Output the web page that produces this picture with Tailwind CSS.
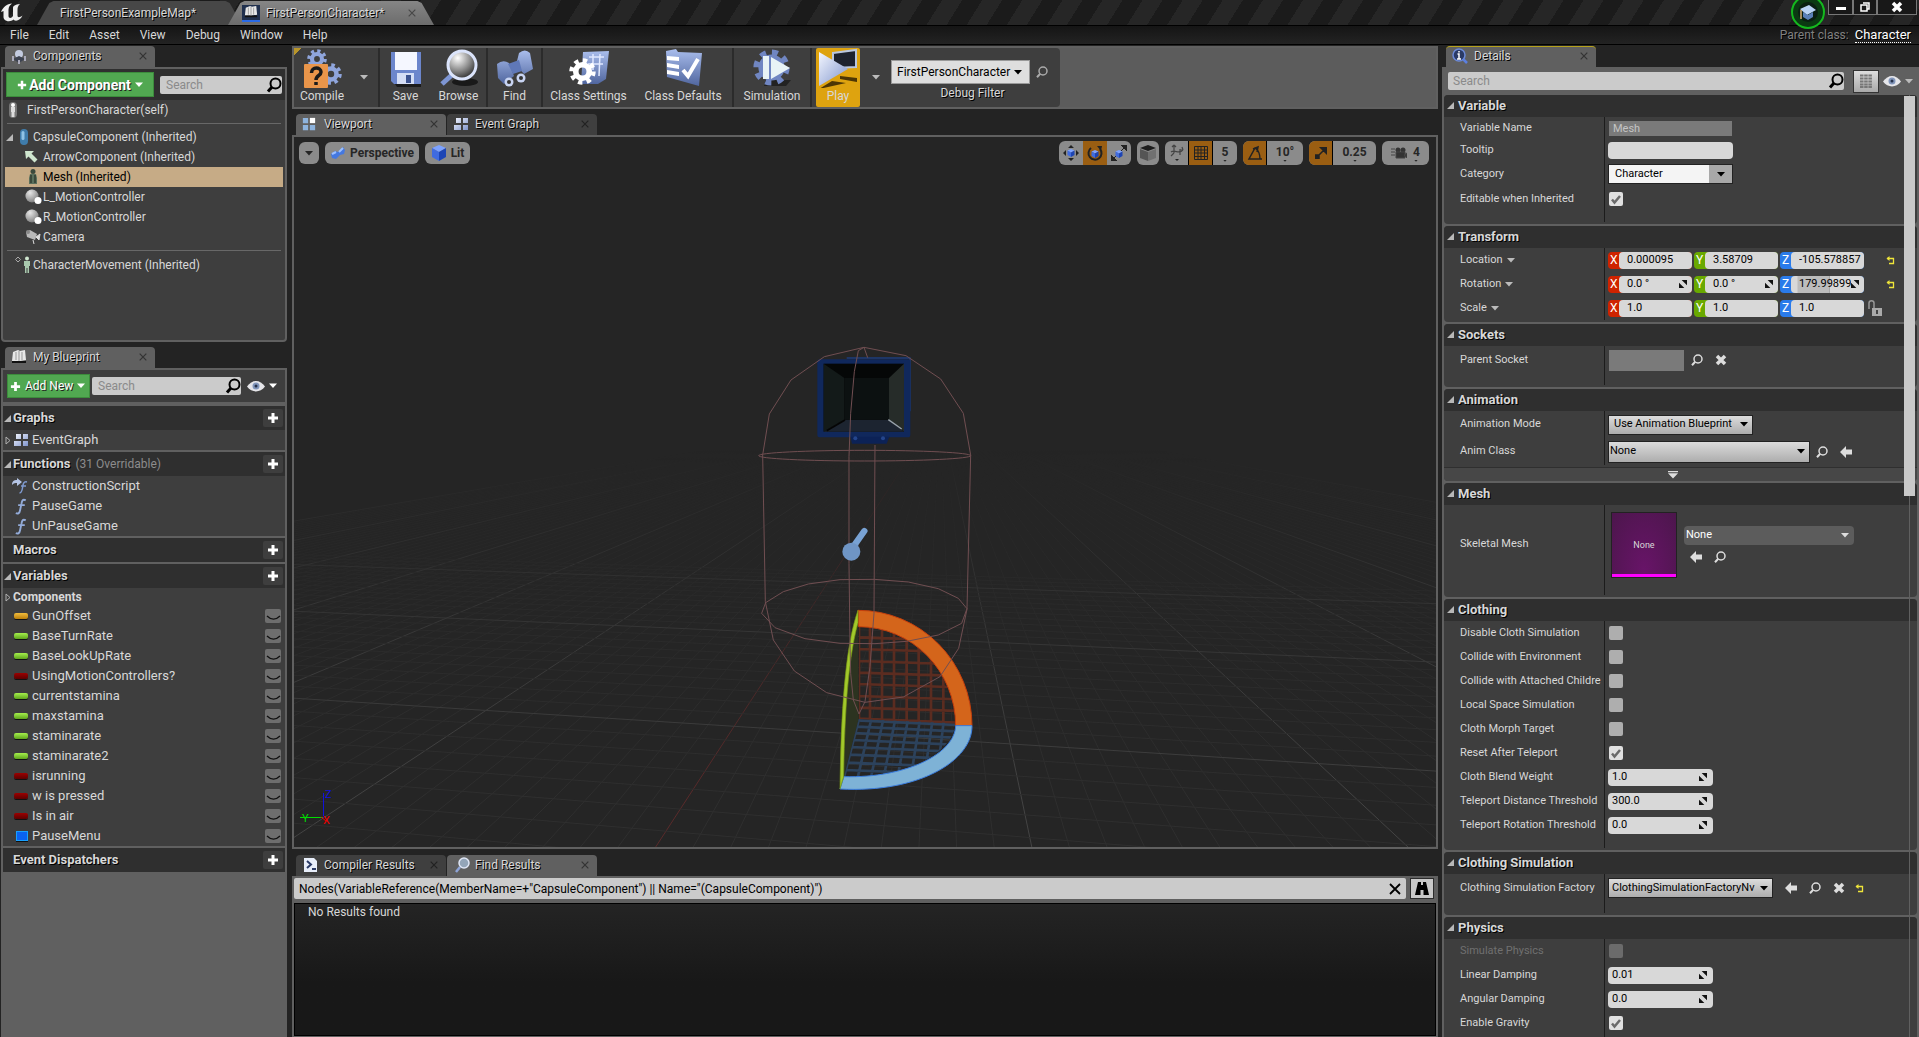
<!DOCTYPE html>
<html lang="en">
<head>
    <meta charset="UTF-8">
    <meta name="viewport" content="width=device-width, initial-scale=1.0">
    <title>FirstPersonCharacter</title>
    <script src="https://cdn.jsdelivr.net/npm/@tailwindcss/browser@4"></script>
</head>
<body class="flex h-screen flex-col overflow-hidden bg-[#232323] font-[Roboto,'Liberation_Sans',sans-serif] text-xs text-[#d8d8d8]">

    <!-- Shared icons -->
    <svg class="absolute size-0">
        <defs>
            <linearGradient id="steel" x1="0" y1="0" x2="1" y2="1"><stop offset="0" stop-color="#f4f7ff"/><stop offset="1" stop-color="#7f94cc"/></linearGradient>
            <linearGradient id="blue" x1="0" y1="0" x2="0" y2="1"><stop offset="0" stop-color="#a9bdec"/><stop offset="1" stop-color="#50669f"/></linearGradient>
            <radialGradient id="lens" cx=".35" cy=".25" r=".9"><stop offset="0" stop-color="#fff"/><stop offset=".5" stop-color="#8b8b8b"/><stop offset="1" stop-color="#0c0c0c"/></radialGradient>
        </defs>
        <symbol id="mag" viewBox="0 0 16 16"><circle cx="9.5" cy="6.5" r="5" fill="none" stroke="currentColor" stroke-width="2"/><path d="M6 10 2 14.5" stroke="currentColor" stroke-width="3"/></symbol>
        <symbol id="mag-sm" viewBox="0 0 12 12"><circle cx="7" cy="5" r="4" fill="none" stroke="currentColor" stroke-width="1.5"/><path d="M4.2 7.8 1 11.2" stroke="currentColor" stroke-width="2"/></symbol>
        <symbol id="back" viewBox="0 0 12 12"><path d="M0 6 6 0v3.5h6v5H6V12z" fill="currentColor"/></symbol>
        <symbol id="cross" viewBox="0 0 12 12"><path d="m2 2 8 8m0-8-8 8" stroke="currentColor" stroke-width="3.5"/></symbol>
        <symbol id="cross-thin" viewBox="0 0 12 12"><path d="m1 1 10 10m0-10-10 10" stroke="currentColor" stroke-width="1.8"/></symbol>
        <symbol id="plus" viewBox="0 0 12 12"><path d="M6 1v10M1 6h10" stroke="currentColor" stroke-width="3"/></symbol>
        <symbol id="down" viewBox="0 0 8 5"><path d="M0 0h8L4 4.5z" fill="currentColor"/></symbol>
        <symbol id="down-line" viewBox="0 0 10 8"><path d="M0 0h10v1.2H0zM0 2.2h10L5 7.5z" fill="currentColor"/></symbol>
        <symbol id="open" viewBox="0 0 7 7"><path d="M7 0v7H0z" fill="#b8b8b8"/></symbol>
        <symbol id="closed" viewBox="0 0 6 9"><path d="M1 1v7l4-3.5z" fill="none" stroke="#b0b0b0"/></symbol>
        <symbol id="reset" viewBox="0 0 9 9"><path d="M1 2.5h6.500v5H3" fill="none" stroke="#efe53a" stroke-width="1.300"/><path d="M3.500 0v5L.5 2.500z" fill="#efe53a"/></symbol>
        <symbol id="spin" viewBox="0 0 9 9"><path d="M3 0h6v6zM0 3v6h6z" fill="#111"/></symbol>
        <symbol id="eye" viewBox="0 0 18 12"><path d="M0 6.5C5-1 13-1 18 6.5 13 13 5 13 0 6.5z" fill="#e6e6ea"/><circle cx="9" cy="6" r="3.500" fill="#8296bb"/><circle cx="9" cy="6" r="1.500" fill="#26324c"/></symbol>
        <symbol id="gear" viewBox="0 0 24 24"><circle cx="12" cy="12" r="9.5" fill="none" stroke="currentColor" stroke-width="4.500" stroke-dasharray="3.73 3.73"/><circle cx="12" cy="12" r="6" fill="none" stroke="currentColor" stroke-width="5"/></symbol>
        <symbol id="graph" viewBox="0 0 16 14"><path d="M3 1h5v5H3zM10 1h5v5h-5zM1 8h7v5H1zM10 8h5v5h-5z" fill="url(#steel)"/></symbol>
        <symbol id="grid4" viewBox="0 0 16 16"><path d="M1 1h6v6H1zM1 9h6v6H1zM9 9h6v6H9z" fill="#8eb4de"/><path d="M9 1h6v6H9z" fill="#fff"/></symbol>
        <symbol id="book" viewBox="0 0 16 16"><path d="M2 3 7 1l2 1 5-1 1 10-6 1-8 0z" fill="#e8e8e8"/><path d="M1 12h14v2H1z" fill="#111"/><path d="M5 3v8M8 2v10M11 3v8" stroke="#999"/></symbol>
        <symbol id="fn" viewBox="0 0 14 18"><path d="M12 2.500C9 .5 8 3 7.500 6L6 13c-.5 3-2 4-4.500 3M4 7.500h7" fill="none" stroke="#93abd8" stroke-width="2"/></symbol>
        <symbol id="sphere" viewBox="0 0 18 16"><circle cx="7" cy="7" r="6.500" fill="url(#lens)"/><circle cx="7" cy="7" r="6.500" fill="#ccc" opacity=".5"/><circle cx="13" cy="11.500" r="3.500" fill="#fff"/></symbol>
        <symbol id="cube" viewBox="0 0 16 16"><path d="m8 0 7 3-7 4-7-4z" fill="#7da2ff"/><path d="m1 3 7 4v9l-7-4z" fill="#3f6be0"/><path d="m15 3-7 4v9l7-4z" fill="#1d45b5"/></symbol>
        <symbol id="check" viewBox="0 0 14 14"><path d="m3 7.500 2.500 3L11 4" fill="none" stroke="#6a6a6a" stroke-width="2.500"/></symbol>
    </svg>

    <!-- Title bar -->
    <header class="flex h-[25px] shrink-0 items-end bg-[repeating-linear-gradient(122deg,#1b1b1b_0_17px,#262626_17px_34px)]">
        <svg class="h-6 w-[37px] self-start" viewBox="0 0 37 24"><path d="M1 12C3 7 7 4 12 3.500c-3 2.500-3.500 4-3.500 8V16c0 2.500 3 2.500 4.500 0V8c0-2 2-3.500 7-4-2 2-2.500 3-2.500 6v5.500c0 2.500 2.500 2 5 0-2 5-7 6.500-9 4-3 3-10 2-10-2.500V11z" fill="#eee"/></svg>
        <button class="h-6 w-[205px] bg-[#474747] pl-[23px] text-left [clip-path:polygon(0_100%,6%_8%,8%_0,92%_0,94%_8%,100%_100%)] [text-shadow:1px_1px_0_#000]">FirstPersonExampleMap*</button>
        <div class="-ml-[14px] flex h-6 w-[206px] items-center bg-linear-to-b from-[#868686] to-[#6c6c6c] pl-[14px] [clip-path:polygon(0_100%,6%_8%,8%_0,92%_0,94%_8%,100%_100%)]">
            <span class="grid h-[17px] w-[18px] place-items-center border-b-2 border-[#2a6be8] bg-[#20304e]"><svg class="size-3.5"><use href="#book"/></svg></span>
            <button class="ml-1.5 w-[142px] text-left [text-shadow:1px_1px_0_#000]">FirstPersonCharacter*</button>
            <svg class="size-2 text-[#484848]"><use href="#cross-thin"/></svg>
        </div>
        <div class="ml-auto flex self-start pr-0.5">
            <svg class="relative z-10 -mb-5 mr-0.5 h-[30px] w-9" viewBox="0 0 36 30"><circle cx="18" cy="12" r="16" fill="#0b3a12" stroke="#14b81e" stroke-width="2"/><circle cx="18" cy="12" r="10" fill="#0a1f12"/><path d="m10 9 9-4 7 5-9 5z" fill="#b9d3f5"/><path d="m13 12 5 3 5-3v5l-5 3-5-3z" fill="#5a80b8"/><path d="M11 10v9" stroke="#d9b27a" stroke-width="1.5"/></svg>
            <button aria-label="Minimize" class="grid h-[15px] w-[25px] place-items-end justify-center border border-t-0 border-[#777] bg-[#181818] pb-1"><span class="h-[3px] w-2.5 bg-white"></span></button>
            <button aria-label="Restore" class="grid h-[15px] w-6 place-items-center border border-t-0 border-[#777] bg-[#181818]"><svg class="size-2.5" viewBox="0 0 10 10"><path d="M3 1h6v6H7M1 3h6v6H1z" fill="none" stroke="#fff" stroke-width="1.5"/></svg></button>
            <button aria-label="Close" class="grid h-[15px] w-10 place-items-center border border-t-0 border-[#777] bg-[#181818] text-white"><svg class="size-3"><use href="#cross"/></svg></button>
        </div>
    </header>

    <!-- Menu bar -->
    <nav class="flex h-5 shrink-0 items-center border-y border-black bg-linear-to-b from-[#151515] to-[#232323] px-2.5 [text-shadow:1px_1px_0_#000]">
        <div class="flex gap-5">
            <button>File</button><button>Edit</button><button>Asset</button><button>View</button><button>Debug</button><button>Window</button><button>Help</button>
        </div>
        <span class="ml-auto text-[#808080]">Parent class:</span>
        <a href="#" class="ml-1.5 -mr-0.5 border-b border-dotted border-white text-[13px] leading-[14px] text-white">Character</a>
    </nav>

    <main class="flex min-h-0 flex-1 gap-1 pt-px">

        <!-- Left column -->
        <aside class="flex w-[287px] shrink-0 flex-col pl-px">
            <div class="ml-1 flex h-[21px] w-[150px] shrink-0 items-center rounded-t bg-[#606060] px-1.5 pb-0.5 [text-shadow:1px_1px_0_#000]">
                <svg class="size-4" viewBox="0 0 16 16"><circle cx="8" cy="6" r="4" fill="#c3cbe0"/><path d="m8 8 6 3-6 4-6-4z" fill="#3c4250"/><path d="M2 8v5m12-5v5M8 12v4" stroke="#aab" stroke-width="2"/></svg>
                <span class="ml-1.5">Components</span><svg class="ml-auto mr-0.5 size-2 text-[#333]"><use href="#cross-thin"/></svg>
            </div>
            <section class="flex h-[275px] shrink-0 flex-col rounded-b border-2 border-[#606060] bg-[#3e3e3e]">
                <div class="flex h-[31px] shrink-0 items-center gap-1.5 bg-[#2f2f2f] px-[3px]">
                    <button class="flex h-[25px] w-[148px] items-center justify-center gap-0.5 border border-[#3c8c3c] bg-[#51a851] text-sm font-bold text-white [text-shadow:1px_1px_0_#222]"><svg class="size-2.5"><use href="#plus"/></svg>Add Component<svg class="ml-0.5 h-1.5 w-2"><use href="#down"/></svg></button>
                    <label class="flex h-[18px] flex-1 items-center rounded-xs bg-[#cbcbcb] pl-1.5 text-black"><input aria-label="Search components" placeholder="Search" class="w-full min-w-0 outline-none placeholder:text-[#8a8a8a]"><svg class="size-4 shrink-0"><use href="#mag"/></svg></label>
                </div>
                <ul class="leading-5">
                    <li class="flex h-5 items-center pl-1"><svg class="mr-2 h-4 w-3" viewBox="0 0 12 16"><rect x="2" width="8" height="16" rx="4" fill="#777"/><circle cx="6" cy="3" r="2" fill="#fff"/><path d="M4 5h4v5H4zM4.500 10h3v5h-3z" fill="#ddd"/></svg>FirstPersonCharacter(self)</li>
                    <li class="mx-1 mb-0.5 mt-[3px] h-0.5 border-t border-[#686868]"></li>
                    <li class="flex h-5 items-center pl-[3px]"><svg class="size-[7px]"><use href="#open"/></svg><svg class="ml-1.5 mr-1 h-4 w-2.5" viewBox="0 0 10 16"><rect x="1" width="8" height="16" rx="4" fill="#3f7cab"/><rect x="2.500" y="2" width="3" height="9" rx="1.500" fill="#8fc3e6"/></svg>CapsuleComponent (Inherited)</li>
                    <li class="flex h-5 items-center pl-5"><svg class="mr-1 size-4" viewBox="0 0 16 16"><path d="M2 2h9L8.500 4.500l6 6-3 3-6-6L3 10z" fill="#cfe6cf"/></svg>ArrowComponent (Inherited)</li>
                    <li class="mx-0.5 flex h-5 items-center bg-[#c6ab86] pl-5 text-black"><svg class="mr-0.5 h-4 w-4" viewBox="0 0 16 16"><circle cx="8" cy="2.500" r="2.500" fill="#3c4a3c"/><path d="M5 5h6l1 4v6H4V9z" fill="#5b6f5b"/><path d="M6 6v8m4-8v8" stroke="#1c241c"/></svg>Mesh (Inherited)</li>
                    <li class="flex h-5 items-center pl-[22px]"><svg class="h-4 w-[18px]"><use href="#sphere"/></svg>L_MotionController</li>
                    <li class="flex h-5 items-center pl-[22px]"><svg class="h-4 w-[18px]"><use href="#sphere"/></svg>R_MotionController</li>
                    <li class="flex h-5 items-center pl-[22px]"><svg class="mr-0.5 size-4" viewBox="0 0 16 16"><path d="m1 3 4-2 7 4-2 6-8-3z" fill="#b9b9b9"/><circle cx="3" cy="3" r="2" fill="#888"/><path d="m11 8 4-3-1 6zM8 11l1 4" fill="#ddd" stroke="#ddd"/></svg>Camera</li>
                    <li class="mx-1 my-[3px] h-0.5 border-t border-[#686868]"></li>
                    <li class="flex h-5 items-center pl-3"><svg class="mr-0.5 h-[18px] w-4" viewBox="0 0 16 18"><path d="m3 1 2.500 2.500L3 6 .5 3.500z" fill="none" stroke="#aaa"/><circle cx="12" cy="2.500" r="2" fill="#cfe6cf"/><path d="M9 5h6v5h-1v7h-1.500v-5h-1v5H10v-7H9z" fill="#a9c9ae"/></svg>CharacterMovement (Inherited)</li>
                </ul>
            </section>

            <div class="ml-1 mt-[5px] flex h-[21px] w-[150px] shrink-0 items-center rounded-t bg-[#606060] px-1.5 pb-0.5 [text-shadow:1px_1px_0_#000]">
                <svg class="size-4"><use href="#book"/></svg><span class="ml-1.5">My Blueprint</span><svg class="ml-auto mr-0.5 size-2 text-[#333]"><use href="#cross-thin"/></svg>
            </div>
            <section class="flex min-h-0 flex-1 flex-col gap-0.5 border-2 border-[#606060] bg-[#606060] text-[13px]">
                <div class="mb-0.5 flex h-8 shrink-0 items-center bg-[#3e3e3e] px-1 text-xs">
                    <button class="flex h-6 w-[83px] items-center gap-1 border border-[#3c8c3c] bg-[#51a851] pl-0.5 text-white [text-shadow:1px_1px_0_#222]"><svg class="size-[11px]"><use href="#plus"/></svg>Add New<svg class="h-1.5 w-2"><use href="#down"/></svg></button>
                    <label class="ml-0.5 flex h-[18px] w-[149px] items-center rounded-xs bg-[#cbcbcb] pl-1.5 text-black"><input aria-label="Search blueprint" placeholder="Search" class="w-full min-w-0 outline-none placeholder:text-[#8a8a8a]"><svg class="size-4 shrink-0"><use href="#mag"/></svg></label>
                    <button aria-label="View options" class="ml-1.5 flex items-center gap-1 text-white"><svg class="h-3 w-[18px]"><use href="#eye"/></svg><svg class="h-1.5 w-2"><use href="#down"/></svg></button>
                </div>
                <div id="blueprint" class="flex flex-col gap-0.5"></div>
            </section>
        </aside>

        <!-- Center column -->
        <div class="flex min-w-0 flex-1 flex-col pl-px">
            <div class="h-[63px] shrink-0 border-2 border-[#606060] bg-[#5c5c5c]">
                <div class="flex h-[59px] w-[766px] items-stretch rounded-r bg-[#3e3e3e] [text-shadow:1px_1px_0_#000]">
                    <button class="flex w-14 flex-col items-center bg-[linear-gradient(135deg,#b8952a_0_5px,transparent_5px)]">
                        <svg class="h-10 w-10" viewBox="0 0 40 40"><g color="#8fa5dc"><use href="#gear" x="5" y="1" width="20" height="20"/><use href="#gear" x="18" y="15" width="22" height="22"/></g><rect x="2" y="16" width="24" height="24" rx="1" fill="#e9954a"/><path d="M9.500 25c0-7 9.500-6 9.500-1 0 4-5 3-5 8m0 2v3" fill="none" stroke="#1a1a1a" stroke-width="3.500"/></svg>
                        Compile
                    </button>
                    <button aria-label="Compile options" class="grid w-7 place-items-center"><svg class="h-[5px] w-2 text-[#bbb]"><use href="#down"/></svg></button>
                    <button class="flex w-[53px] flex-col items-center border-l-2 border-[#2b2b2b]">
                        <svg class="h-10 w-10" viewBox="0 0 40 40"><path d="M9 36h26v3H11z" fill="#1b1b1b"/><path d="M5 4h30v32H8l-3-3z" fill="#6c86cc"/><path d="M9 4h22v18H9z" fill="#f5f7ff"/><path d="M11 25h17v11H11z" fill="#d5def5"/><path d="M20 27h5v8h-5z" fill="#3d5390"/></svg>
                        Save
                    </button>
                    <button class="flex w-[55px] flex-col items-center">
                        <svg class="h-10 w-10" viewBox="0 0 40 40"><ellipse cx="26" cy="34" rx="13" ry="4" fill="#191919"/><path d="m14 26-11 10" stroke="#7e96d4" stroke-width="5"/><circle cx="23" cy="17" r="14" fill="url(#lens)" stroke="#dbe4fb" stroke-width="3"/></svg>
                        Browse
                    </button>
                    <button class="flex w-[55px] flex-col items-center border-l-2 border-[#2b2b2b]">
                        <svg class="h-10 w-10" viewBox="0 0 40 40"><path d="M2 16q6-5 12-1l5 13-10 8-6-6zM24 5q6-5 11 0l3 16-9 5-8-9z" fill="url(#blue)"/><path d="m13 16 11-4 3 11-9 3z" fill="#5f78b8"/><circle cx="14" cy="34" r="4.500" fill="#c8d4f2"/><circle cx="26" cy="30" r="4.500" fill="#c8d4f2"/><circle cx="14" cy="34" r="2" fill="#333"/><circle cx="26" cy="30" r="2" fill="#333"/></svg>
                        Find
                    </button>
                    <button class="flex w-[93px] flex-col items-center border-l-2 border-[#2b2b2b]">
                        <svg class="h-10 w-10" viewBox="0 0 40 40"><path d="m14 4 26-1-3 28-8 5H12z" fill="url(#blue)"/><path d="M20 9h15m-16 7h15M24 6v16m7-16-1 22" stroke="#dfe8ff" stroke-width="1.500"/><use href="#gear" x="0" y="10" width="27" height="27" color="#fff"/></svg>
                        Class Settings
                    </button>
                    <button class="flex w-[98px] flex-col items-center">
                        <svg class="h-10 w-10" viewBox="0 0 40 40"><path d="m3 3 10-2 2 3 24 1-3 33L4 29z" fill="url(#blue)"/><path d="m4 8 12 1v4l-12-1zM4 15l12 2v4L4 19zM4 22l12 2v4L4 26z" fill="#fff"/><path d="m20 22 5 6L35 11" fill="none" stroke="#fff" stroke-width="4"/></svg>
                        Class Defaults
                    </button>
                    <button class="flex w-[78px] flex-col items-center border-l-2 border-[#2b2b2b]">
                        <svg class="h-10 w-10" viewBox="0 0 40 40"><path d="M14 32h25l-5 6H12z" fill="#222"/><use href="#gear" x="1" y="1" width="37" height="37" color="#7086c2"/><circle cx="19.500" cy="19.500" r="8" fill="#7086c2"/><path d="M11 8h6v23h-6zM19 9l19 11-19 11z" fill="#e8f3f6"/></svg>
                        Simulation
                    </button>
                    <div class="w-1.5 border-l-2 border-[#2b2b2b]"></div>
                    <button class="flex w-11 flex-col items-center rounded-xs bg-[#dea30f]">
                        <svg class="h-10 w-11" viewBox="0 0 44 40"><path d="m17 5 23-3v17l-23 1z" fill="#1e222e" stroke="#b9c6e0" stroke-width="2"/><path d="M3 41 30 35l-14-2zM24 28l17 2v4l-17-3z" fill="#4d3605"/><path d="m3 4 29 17L3 38z" fill="url(#steel)"/></svg>
                        Play
                    </button>
                    <button aria-label="Play options" class="grid w-[31px] place-items-center"><svg class="h-[5px] w-2 text-[#bbb]"><use href="#down"/></svg></button>
                    <div class="flex flex-col pt-3 text-center">
                        <div class="flex items-center gap-1.5">
                            <span class="relative flex w-[139px] items-center">
                                <select id="debugFilter" class="h-6 w-full appearance-none border border-[#999] bg-[#dedede] pl-[5px] text-black [text-shadow:none]"><option>FirstPersonCharacter</option></select>
                                <svg class="pointer-events-none absolute right-2 h-[5px] w-2 text-black"><use href="#down"/></svg>
                            </span>
                            <svg class="size-3 text-[#aaa]"><use href="#mag-sm"/></svg>
                        </div>
                        <label for="debugFilter" class="pl-1.5 leading-[18px]">Debug Filter</label>
                    </div>
                </div>
            </div>

            <div class="mt-[5px] flex gap-px pl-1 [text-shadow:1px_1px_0_#000]">
                <div class="flex h-[21px] w-[150px] items-center rounded-t bg-[#606060] px-1.5 pb-0.5"><svg class="size-3.5"><use href="#grid4"/></svg><span class="ml-2">Viewport</span><svg class="ml-auto mr-0.5 size-2 text-[#333]"><use href="#cross-thin"/></svg></div>
                <div class="flex h-[21px] w-[150px] items-center rounded-t bg-[#3f3f3f] px-1.5 pb-0.5"><svg class="h-3.5 w-4"><use href="#graph"/></svg><span class="ml-1.5">Event Graph</span><svg class="ml-auto mr-0.5 size-2 text-[#222]"><use href="#cross-thin"/></svg></div>
            </div>

            <!-- 3D viewport -->
            <section class="relative min-h-0 flex-1 overflow-hidden border-2 border-[#606060] bg-[#252525]">
                <svg class="absolute inset-0 h-full w-full" viewBox="294 137 1142 710" preserveAspectRatio="xMidYMid slice">
                    <defs>
                        <linearGradient id="fade" gradientUnits="userSpaceOnUse" x1="0" y1="450" x2="0" y2="800"><stop offset="0" stop-color="#000"/><stop offset=".5" stop-color="#999"/><stop offset="1" stop-color="#fff"/></linearGradient>
                        <mask id="fadeMask" maskUnits="userSpaceOnUse" x="294" y="137" width="1142" height="720"><path d="M294 137h1142v720H294z" fill="url(#fade)"/></mask>
                        <clipPath id="redClip"><path d="M386 890A291 297 0 0 1 677 1187L386 1167z"/></clipPath>
                        <clipPath id="blueClip"><path d="M386 1167 677 1180C668 1270 530 1345 342 1340z"/></clipPath>
                    </defs>
                    <g id="floor" mask="url(#fadeMask)" fill="none"></g>
                    <g transform="translate(730 330) scale(.33333)" fill="none">
                        <!-- camera body -->
                        <path d="M350 84h190v160" stroke="#1d3c7c" stroke-width="4"/>
                        <rect x="262" y="88" width="279" height="234" rx="8" fill="#10285c"/>
                        <path d="M361 320h117l-8 21H366z" fill="#0c2256"/><circle cx="376" cy="325" r="6" fill="#24458c"/><circle cx="459" cy="325" r="6" fill="#24458c"/>
                        <rect x="281" y="101" width="241" height="204" fill="#050707"/>
                        <path d="m281 101 62 43v125l-62 36z" fill="#131a19"/><path d="m522 101-45 43v125l45 36z" fill="#262c29"/><path d="m281 305 62-36h134l45 36z" fill="#1c2430"/>
                        <rect x="343" y="144" width="134" height="125" fill="#0c1111"/>
                        <path d="m475 269 40 28" stroke="#9aa4ac" stroke-width="4"/><path d="m345 270-55 32" stroke="#050505" stroke-width="5"/>
                        <!-- rotation gizmo -->
                        <path d="M384 870C350 1000 343 1200 341 1340L386 1167z" fill="#2c3320"/>
                        <path clip-path="url(#redClip)" stroke="#5b2c20" stroke-width="8" d="M387 880v300M420 880v300M456 880v300M492 880v300M530 880v300M566 880v300M603 880v300M640 880v300M386 922l300 10M386 957l300 10M386 993l300 10M386 1028l300 10M386 1062l300 10M386 1098l300 10M386 1133l300 10M386 1166l300 12"/>
                        <path clip-path="url(#blueClip)" stroke="#2c425c" stroke-width="8" d="m387 1167-45 175m82-175-42 180m78-180-38 180m74-180-36 180m74-180-32 180m68-180-28 180m66-180-26 180m60-180-22 180M380 1171l300 14M380 1190l300 14M372 1209l300 14M370 1230l300 14M364 1251l300 14M358 1274l300 12M352 1298l300 12M346 1320l300 12"/>
                        <path d="M384 841A342 346 0 0 1 726 1187H677A291 297 0 0 0 386 890z" fill="#d4651b" stroke="#c63f0c" stroke-width="3"/>
                        <path d="M726 1187C728 1290 570 1390 330 1377L342 1340C530 1345 675 1270 677 1187z" fill="#7eb2d6" stroke="#3a7de0" stroke-width="3"/>
                        <path d="M384 841C345 950 333 1150 330 1377L341 1340C343 1200 350 1000 384 878z" fill="#a2c92c" stroke="#7a9c10" stroke-width="2"/>
                        <!-- capsule wireframe -->
                        <g stroke="#704e51" stroke-width="3">
                            <path d="M98 375 118 252 183 150 283 80 402 52 528 77 632 147 700 250 722 375 711 838 686 955 630 1040 520 1101 405 1117 290 1088 193 1023 130 930 106 815z"/>
                            <ellipse cx="404" cy="377" rx="318" ry="16"/>
                            <path d="M95 850 107 818 160 785 235 762 330 749 433 748 535 756 625 776 685 805 711 836 695 880 625 915 530 934 435 941 330 940 225 926 135 893z"/>
                            <path d="M413 83 402 52 385 62 373 125 362 250 357 380V700L360 940 362 1030 370 1110 387 1152 405 1115 420 1010 432 850 435 345"/>
                        </g>
                        <path d="m370 650 33-47" stroke="#78a2d4" stroke-width="19" stroke-linecap="round"/><circle cx="364" cy="665" r="27" fill="#6f95c5"/>
                    </g>
                    <path d="M323.500 793v25" stroke="#1111dd"/><path d="M300 817.500h23" stroke="#0d0"/><path d="m321 817 5 4" stroke="#e00"/>
                    <g class="text-[11px]"><text x="325" y="798" fill="#1111dd">Z</text><text x="302" y="822" fill="#0d0">Y</text><text x="323" y="824" fill="#e00">X</text></g>
                </svg>

                <div class="absolute inset-x-0 top-1 flex h-6 items-center gap-1.5 pl-[5px] pr-[7px] text-xs font-bold text-[#262626]">
                    <button aria-label="Viewport options" class="grid h-[22px] w-5 place-items-center rounded-md bg-[#8b8b8b]"><svg class="h-[5px] w-2"><use href="#down"/></svg></button>
                    <button class="flex h-[22px] w-[94px] items-center justify-center gap-1 rounded-md bg-[#8b8b8b]"><svg class="size-4" viewBox="0 0 16 16"><path d="m1 9 4-3 3 1 5-5 2 3-1 4-4 1-4 4-4-1z" fill="#4478e0"/><path d="m2 9 4-2m3 0 4-4" stroke="#9cc0ff" stroke-width="2"/></svg>Perspective</button>
                    <button class="flex h-[22px] w-[45px] items-center justify-center gap-1 rounded-md bg-[#8b8b8b]"><svg class="size-4"><use href="#cube"/></svg>Lit</button>
                    <div class="ml-auto flex h-6 overflow-hidden rounded-md bg-[#8b8b8b]">
                        <button aria-label="Move" class="grid w-6 place-items-center"><svg class="size-4" viewBox="0 0 16 16"><path d="m8 0 3 3H5zM8 16l3-3H5zM0 8l3-3v6zM16 8l-3-3v6z" fill="#222"/><use href="#cube" x="4" y="4" width="8" height="8"/></svg></button>
                        <button aria-label="Rotate" class="grid w-6 place-items-center bg-[#9a5e12]"><svg class="size-4" viewBox="0 0 16 16"><path d="M4 3a6.500 6.500 0 1 0 9 1" fill="none" stroke="#222" stroke-width="2"/><path d="m10 1 5 0-1 5z" fill="#222"/><use href="#cube" x="4" y="5" width="8" height="8"/></svg></button>
                        <button aria-label="Scale" class="grid w-6 place-items-center"><svg class="size-4" viewBox="0 0 16 16"><path d="M16 0v6l-6-6zM0 16v-6l6 6zM13 3l-3 3M3 13l3-3" fill="#222" stroke="#222"/><use href="#cube" x="4" y="5" width="8" height="8"/></svg></button>
                    </div>
                    <button aria-label="Coordinate space" class="grid h-6 w-[22px] place-items-center rounded-md bg-[#8b8b8b]"><svg class="size-4" viewBox="0 0 16 16"><path d="m8 0 8 3-8 3-8-3z" fill="#1c1c1c"/><path d="m0 4 8 3v9l-8-3z" fill="#555"/><path d="m16 4-8 3v9l8-3z" fill="#707070"/></svg></button>
                    <div class="flex h-6 divide-x divide-black overflow-hidden rounded-md bg-[#8b8b8b]">
                        <button aria-label="Surface snapping" class="grid w-6 place-items-center"><svg class="h-5 w-4" viewBox="0 0 16 20"><path d="M2 9c4-3 8 3 12-2M5 2v8m-3 3 3-3M5 2 3 4m2-2 2 2m7 3-1-3m1 3-3 0M11 6v6" fill="none" stroke="#444" stroke-width="1.200"/><path d="M6 16h4l-2 2z" fill="#222"/></svg></button>
                        <button aria-label="Grid snapping" class="grid w-6 place-items-center bg-[#9a5e12]"><svg class="size-3.5" viewBox="0 0 14 14"><path d="M.5.500h13v13H.500zM4 0v14M7 0v14M10.500 0v14M0 4h14M0 7h14M0 10.500h14" fill="none" stroke="#222"/></svg></button>
                        <button class="flex w-6 flex-col items-center justify-center leading-4">5<svg class="h-0.5 w-1"><use href="#down"/></svg></button>
                    </div>
                    <div class="flex h-6 divide-x divide-black overflow-hidden rounded-md bg-[#8b8b8b]">
                        <button aria-label="Rotation snapping" class="grid w-6 place-items-center bg-[#9a5e12]"><svg class="size-4" viewBox="0 0 16 16"><path d="M15 14H2L8 3c3 2 5 5 5 11M6 4l5-2-1 5" fill="none" stroke="#222" stroke-width="1.500"/></svg></button>
                        <button class="flex w-9 flex-col items-center justify-center leading-4">10°<svg class="h-0.5 w-1"><use href="#down"/></svg></button>
                    </div>
                    <div class="flex h-6 divide-x divide-black overflow-hidden rounded-md bg-[#8b8b8b]">
                        <button aria-label="Scale snapping" class="grid w-6 place-items-center bg-[#9a5e12]"><svg class="size-3" viewBox="0 0 12 12"><path d="M12 0v7L5 0zM0 12V8h4v4zM4 8l5-5" fill="#222" stroke="#222" stroke-width="1.500"/></svg></button>
                        <button class="flex w-[43px] flex-col items-center justify-center leading-4">0.25<svg class="h-0.5 w-1"><use href="#down"/></svg></button>
                    </div>
                    <button class="flex h-6 w-[47px] items-center justify-center gap-1.5 rounded-md bg-[#8b8b8b]"><svg class="h-3 w-4" viewBox="0 0 16 12"><circle cx="7" cy="3" r="2.500" fill="#333"/><circle cx="12" cy="3" r="2.500" fill="#333"/><path d="M5 5h9v6H5zM13 8l3-2v5zM0 2h4M0 5h4M0 8h4" fill="#333" stroke="#444"/></svg><span class="flex flex-col items-center leading-4">4<svg class="h-0.5 w-1"><use href="#down"/></svg></span></button>
                </div>
            </section>

            <div class="mt-1.5 flex shrink-0 gap-px pl-1 [text-shadow:1px_1px_0_#000]">
                <div class="flex h-[21px] w-[150px] items-center rounded-t bg-[#3f3f3f] px-2 pb-0.5"><svg class="size-4" viewBox="0 0 16 16"><path d="M0 1h10l3 3v11H0z" fill="#e8eefa"/><path d="m3 4 4 3.500L3 11m5 1h4" fill="none" stroke="#2a3a66" stroke-width="2"/></svg><span class="ml-1">Compiler Results</span><svg class="ml-auto size-2 text-[#222]"><use href="#cross-thin"/></svg></div>
                <div class="flex h-[21px] w-[150px] items-center rounded-t bg-[#606060] px-2 pb-0.5"><svg class="size-4" viewBox="0 0 16 16"><path d="m5 10-4 5" stroke="#8ea4d8" stroke-width="2.500"/><circle cx="9" cy="6" r="5" fill="#93a5b8" stroke="#dfe6f5" stroke-width="1.500"/></svg><span class="ml-1">Find Results</span><svg class="ml-auto size-2 text-[#333]"><use href="#cross-thin"/></svg></div>
            </div>
            <section class="flex h-[161px] shrink-0 flex-col bg-[#606060] px-0.5 pb-px pt-0.5">
                <div class="flex h-[21px] gap-1 pr-0.5">
                    <label class="flex flex-1 items-center rounded-xs bg-[#cbcbcb] px-[5px] text-black"><input aria-label="Find in blueprint" class="flex-1 outline-none" value='Nodes(VariableReference(MemberName=+"CapsuleComponent") || Name="(CapsuleComponent)")'><svg class="size-3"><use href="#cross-thin"/></svg></label>
                    <button aria-label="Find" class="grid w-6 place-items-center border border-[#2c2c2c] bg-[#c8c8c8]"><svg class="size-3.5" viewBox="0 0 14 14"><path d="M3 0h3v3h2V0h3l3 13H8.500V8h-3v5H0z" fill="#000"/></svg></button>
                </div>
                <div class="mt-1 flex-1 border border-black bg-linear-to-b from-[#242424] to-[#181818] to-60% px-[13px] leading-4">No Results found</div>
            </section>
        </div>

        <!-- Details column -->
        <aside class="flex w-[477px] shrink-0 flex-col">
            <div class="ml-1 flex h-[21px] w-[150px] shrink-0 items-center rounded-t border-t border-[#b5a11c] bg-[#606060] px-1.5 pb-0.5 [text-shadow:1px_1px_0_#000]">
                <svg class="size-4" viewBox="0 0 16 16"><circle cx="7" cy="7" r="6" fill="#2a3a66" stroke="#6c8ad8" stroke-width="1.500"/><path d="m11 11 4 4" stroke="#5b7fe0" stroke-width="2.500"/><path d="M5.500 6H7v5m-2 0h4M7 3v1.500" stroke="#fff" stroke-width="1.500" fill="none"/></svg>
                <span class="ml-1.5">Details</span><svg class="ml-auto mr-0.5 size-2 text-[#333]"><use href="#cross-thin"/></svg>
            </div>
            <section class="relative flex min-h-0 flex-1 flex-col bg-[#606060] px-0.5">
                <div class="flex h-7 shrink-0 items-center pl-1 pr-1">
                    <label class="flex h-[18px] flex-1 items-center rounded-xs bg-[#cbcbcb] pl-[5px] text-black"><input aria-label="Search details" placeholder="Search" class="w-full outline-none placeholder:text-[#8a8a8a]"><svg class="size-4 shrink-0"><use href="#mag"/></svg></label>
                    <button aria-label="Property matrix" class="ml-[9px] grid h-[23px] w-[26px] place-items-center border border-[#333] bg-linear-to-b from-[#ddd] to-[#aaa]"><svg class="size-3.5" viewBox="0 0 14 14"><path d="M1 1.500h12M1 4.500h12M1 7.500h12M1 10.500h12M1 13h12" stroke="#777" stroke-width="2" stroke-dasharray="3.500 .7"/></svg></button>
                    <button aria-label="View options" class="ml-1 flex items-center gap-1 text-[#bbb]"><svg class="h-3 w-[18px]"><use href="#eye"/></svg><svg class="h-[5px] w-2"><use href="#down"/></svg></button>
                </div>
                <div id="details" class="flex min-h-0 flex-1 flex-col gap-0.5 overflow-hidden text-[11px]"></div>
                <span class="absolute right-[9px] top-7 h-full w-px bg-[#606060]"></span>
                <span class="absolute right-1 top-[29px] h-[400px] w-[11px] bg-[#c9c9c9]"></span>
            </section>
        </aside>
    </main>

    <script>
        const icon = (name, cls) => `<svg class="${cls}"><use href="#${name}"/></svg>`;

        // ---- My Blueprint tree ----
        const group = (title, open, rows = '', note = '') => `
            <div class="overflow-hidden bg-[#3e3e3e]">
                <div class="flex h-6 items-center bg-[#2f2f2f] pl-px pr-0.5">
                    <span class="w-[9px]">${open ? icon('open', 'size-[7px]') : ''}</span>
                    <b class="[text-shadow:1px_1px_0_#000]">${title}</b><span class="ml-[5px] text-xs text-[#8c8c8c]">${note}</span>
                    <button aria-label="Add to ${title}" class="ml-auto grid h-[18px] w-5 place-items-center rounded-xs bg-[#3e3e3e] text-white">${icon('plus', 'size-3')}</button>
                </div>${rows}
            </div>`;

        const line = (iconHtml, name) => `<div class="flex h-5 items-center"><span class="flex w-[29px] items-center justify-end pr-1">${iconHtml}</span>${name}</div>`;

        const pill = {
            vector: 'h-1.5 w-3.5 rounded-xs bg-linear-to-b from-[#f2bd3a] to-[#b87d08]',
            float: 'h-1.5 w-3.5 rounded-xs bg-linear-to-b from-[#a6f04c] to-[#5fa31c]',
            bool: 'h-1.5 w-3.5 rounded-xs bg-linear-to-b from-[#9c0000] to-[#5c0000]',
            object: 'h-2.5 w-3 border border-[#18a0ff] bg-[#0a62f0]'
        };
        const variables = [
            ['GunOffset', 'vector'], ['BaseTurnRate', 'float'], ['BaseLookUpRate', 'float'], ['UsingMotionControllers?', 'bool'],
            ['currentstamina', 'float'], ['maxstamina', 'float'], ['staminarate', 'float'], ['staminarate2', 'float'],
            ['isrunning', 'bool'], ['w is pressed', 'bool'], ['Is in air', 'bool'], ['PauseMenu', 'object']
        ];
        const variableRows = variables.map(([name, type]) => `
            <div class="flex h-5 items-center">
                <span class="flex w-[29px] justify-end pr-1"><i class="${pill[type]} shadow-[0_1px_0_#111]"></i></span>${name}
                <button aria-label="Toggle ${name}" class="ml-auto mr-1 h-3.5 w-4 rounded-xs bg-[#6e6e6e]"><svg class="h-3.5 w-4" viewBox="0 0 16 14"><path d="M2 7c4 4 9 4 13 0" fill="none" stroke="#111" stroke-width="1.300"/></svg></button>
            </div>`).join('');

        document.getElementById('blueprint').innerHTML =
            group('Graphs', true, `<div class="flex h-5 items-center pl-0.5">${icon('closed', 'h-[9px] w-1.5')}${icon('graph', 'ml-0.5 mr-[3px] h-3.5 w-4')}EventGraph</div>`) +
            group('Functions', true,
                line('<svg class="h-4 w-4" viewBox="0 0 16 16"><path d="M0 7c0-4 2-5 5-5V0l5 4-5 4V5C3 5 2 5 0 7z" fill="#b5c4e4"/><path d="M15 4c-4-1-4 3-4.500 6s-1 5-3 5M9 8h5" fill="none" stroke="#7f9ad0" stroke-width="1.500"/></svg>', 'ConstructionScript') +
                line(icon('fn', 'h-[17px] w-3.5'), 'PauseGame') + line(icon('fn', 'h-[17px] w-3.5'), 'UnPauseGame'), '(31 Overridable)') +
            group('Macros', false) +
            group('Variables', true, `<div class="flex h-[18px] items-center pl-0.5 text-xs font-bold">${icon('closed', 'mr-0.5 h-[9px] w-1.5')}Components</div>` + variableRows) +
            group('Event Dispatchers', false);

        // ---- Details panel ----
        const heights = { 22: 'h-[22px]', 24: 'h-6', 26: 'h-[26px]', 27: 'h-[27px]', 28: 'h-7', 79: 'h-[79px]' };
        const row = (label, control, height = 24, id = '', cls = '') => `
            <div class="flex ${heights[height]}">
                <label ${id ? `for="${id}"` : ''} class="flex w-40 shrink-0 items-center gap-1 overflow-hidden whitespace-nowrap pl-4 ${cls}">${label}</label>
                <div class="flex flex-1 items-center border-l border-[#1c1c1c] pl-[3px]">${control}</div>
            </div>`;
        const foot = '<div class="mb-0.5 ml-40 h-[11px] border-l border-[#1c1c1c]"></div>';
        const panel = (title, rows, end = foot) => `
            <div class="shrink-0 overflow-hidden rounded bg-[#3e3e3e]">
                <h2 class="flex h-[22px] items-center gap-1 bg-[#2f2f2f] pb-px pl-[3px] text-[13px] font-bold [text-shadow:1px_1px_0_#000]">${icon('open', 'size-[7px]')}${title}</h2>
                ${rows}${end}
            </div>`;

        let uid = 0;
        const check = (label, on, disabled) => {
            const id = 'f' + uid++;
            return row(label, `<span class="ml-px grid"><input id="${id}" type="checkbox" ${on ? 'checked' : ''} ${disabled ? 'disabled' : ''} class="peer col-start-1 row-start-1 size-3.5 appearance-none rounded-xs bg-[#aeaeae] checked:bg-[#e0e0e0] disabled:bg-[#6b6b6b]">${icon('check', 'pointer-events-none invisible col-start-1 row-start-1 size-3.5 peer-checked:visible')}</span>`, 24, id, disabled ? 'text-[#707070]' : '');
        };
        const number = (label, value) => {
            const id = 'f' + uid++;
            return row(label, `<span class="flex h-[17px] w-[105px] items-center rounded-sm bg-[#d8d8d8] px-1 text-black"><input id="${id}" value="${value}" class="w-0 flex-1 outline-none">${icon('spin', 'mr-0.5 size-2')}</span>`, 24, id);
        };
        const axisColor = { X: 'bg-[#cf2300]', Y: 'bg-[#69a900]', Z: 'bg-[#2a7bea]' };
        const vector = (label, values, spin, tail) => row(`${label} ${icon('down', 'h-[5px] w-2 text-[#bbb]')}`,
            '<div class="flex gap-0.5">' + ['X', 'Y', 'Z'].map((axis, i) => `
                <span class="flex h-[17px] w-[84px] items-center rounded-sm ${axisColor[axis]} text-white"><span class="w-[11px] pl-0.5 text-xs">${axis}</span><span class="flex h-full w-0 flex-1 items-center rounded-sm pl-2 pr-[3px] text-black ${spin && axis === 'Z' ? 'bg-[linear-gradient(90deg,#d8d8d8_6px,#bcbcbc_7px,#bcbcbc_38px,#777_38px,#d8d8d8_39px)]' : 'bg-[#d8d8d8]'}"><input aria-label="${label} ${axis}" value="${values[i]}" class="w-0 flex-1 outline-none">${spin ? icon('spin', 'mr-0.5 size-2') : ''}</span></span>`).join('') +
            `</div>${tail}`);
        const select = (id, text, cls, arrow = 'text-black') => `<span class="relative flex items-center"><select id="${id}" class="appearance-none ${cls}"><option>${text}</option></select>${icon('down', 'pointer-events-none absolute right-[5px] h-[5px] w-2 ' + arrow)}</span>`;
        const tool = (name, label, cls = 'size-3') => `<button aria-label="${label}" class="ml-3">${icon(name, cls + ' text-[#ddd]')}</button>`;
        const resetTail = icon('reset', 'ml-[22px] size-[9px]');
        const lock = '<svg class="ml-1 h-4 w-3.5" viewBox="0 0 14 16"><path d="M1 9V3c0-3 5-3 5 0v5" fill="none" stroke="#999" stroke-width="1.500"/><path d="M4 8h10v8H4z" fill="#aaa"/><path d="M9 10v4" stroke="#444" stroke-width="2"/></svg>';
        const raised = 'border border-[#222] bg-linear-to-b from-[#dcdcdc] to-[#adadad] text-black';

        document.getElementById('details').innerHTML =
            panel('Variable',
                row('Variable Name', '<input id="varName" value="Mesh" disabled class="ml-px h-[15px] w-[123px] bg-[#7a7a7a] px-1 text-[#c4c4c4]">', 22, 'varName') +
                row('Tooltip', '<input id="tooltip" class="h-[17px] w-[125px] rounded-sm bg-[#d8d8d8] px-1 text-black">', 22, 'tooltip') +
                row('Category', '<span class="relative flex items-center"><select id="category" class="h-5 w-[125px] appearance-none border border-[#222] bg-[linear-gradient(90deg,#f4f4f4_100px,#a8a8a8_100px)] px-1.5 text-black"><option>Character</option></select>' + icon('down', 'pointer-events-none absolute right-2 h-[5px] w-2 text-black') + '</span>', 26, 'category') +
                check('Editable when Inherited', true)) +
            panel('Transform',
                vector('Location', ['0.000095', '3.58709', '-105.578857'], false, resetTail) +
                vector('Rotation', ['0.0 °', '0.0 °', '179.998993'], true, resetTail) +
                vector('Scale', ['1.0', '1.0', '1.0'], false, lock), '<div class="h-0.5"></div>') +
            panel('Sockets',
                row('Parent Socket', '<input id="socket" disabled class="ml-px mr-[-5px] h-[21px] w-[75px] bg-[#7a7a7a]">' + tool('mag-sm', 'Browse sockets') + tool('cross', 'Clear socket'), 28, 'socket')) +
            panel('Animation',
                row('Animation Mode', select('animMode', 'Use Animation Blueprint', 'h-5 w-[145px] pl-[5px] ' + raised), 27, 'animMode') +
                row('Anim Class', select('animClass', 'None', 'h-[22px] w-[202px] pl-px ' + raised) + '<span class="-ml-1.5"></span>' + tool('mag-sm', 'Browse class') + tool('back', 'Use selected class'), 27, 'animClass'),
                `<button aria-label="Show advanced" class="mt-0.5 grid h-3.5 w-full place-items-center border-t border-[#2f2f2f] bg-[#474747] pr-4">${icon('down-line', 'h-2 w-2.5 text-[#ddd]')}</button>`) +
            panel('Mesh',
                row('Skeletal Mesh', `<div class="mx-[3px] flex h-[66px] w-[66px] items-center justify-center border border-[#222] bg-radial-[at_50%_90%] from-[#681468] to-[#4c164c] text-[9px] shadow-[inset_0_-3px_0_#ff00ff]">None</div>
                    <div class="ml-1 flex flex-col gap-1.5">${select('skelMesh', 'None', 'h-[19px] w-[170px] rounded-sm bg-[#5c5c5c] pl-0.5 text-white', 'text-[#ddd]')}<div class="-ml-1.5 flex">${tool('back', 'Use selected mesh')}${tool('mag-sm', 'Browse mesh')}</div></div>`, 79, 'skelMesh')) +
            panel('Clothing',
                check('Disable Cloth Simulation') + check('Collide with Environment') + check('Collide with Attached Childre') +
                check('Local Space Simulation') + check('Cloth Morph Target') + check('Reset After Teleport', true) +
                number('Cloth Blend Weight', '1.0') + number('Teleport Distance Threshold', '300.0') + number('Teleport Rotation Threshold', '0.0')) +
            panel('Clothing Simulation',
                row('Clothing Simulation Factory', select('factory', 'ClothingSimulationFactoryNv', 'h-5 w-[165px] pl-[3px] ' + raised) +
                    tool('back', 'Use selected factory') + tool('mag-sm', 'Browse factory') + tool('cross', 'Clear factory') + icon('reset', 'ml-2.5 size-[9px]'), 28, 'factory')) +
            panel('Physics',
                check('Simulate Physics', false, true) + number('Linear Damping', '0.01') + number('Angular Damping', '0.0') + check('Enable Gravity', true));

        // ---- Perspective floor grid ----
        let floor = '';
        for (let i = -60; i <= 70; i++) {
            const x = 655 + i * 37.7;
            const major = i % 10 === 0;
            floor += `<path d="M940 410 ${x} 848" stroke="${i === 0 ? '#5a2b2b' : major ? '#444' : '#2f2f2f'}"/>`;
        }
        for (let i = 0; i <= 32; i++) {
            const depth = 1 / (0.00212 + i * 0.00015);
            const y = 410 + depth;
            floor += `<path d="M294 ${y} 1436 ${y + depth * 0.253}" stroke="${(i - 9) % 10 === 0 ? '#404040' : '#2f2f2f'}"/>`;
        }
        document.getElementById('floor').innerHTML = floor;
    </script>
</body>
</html>
